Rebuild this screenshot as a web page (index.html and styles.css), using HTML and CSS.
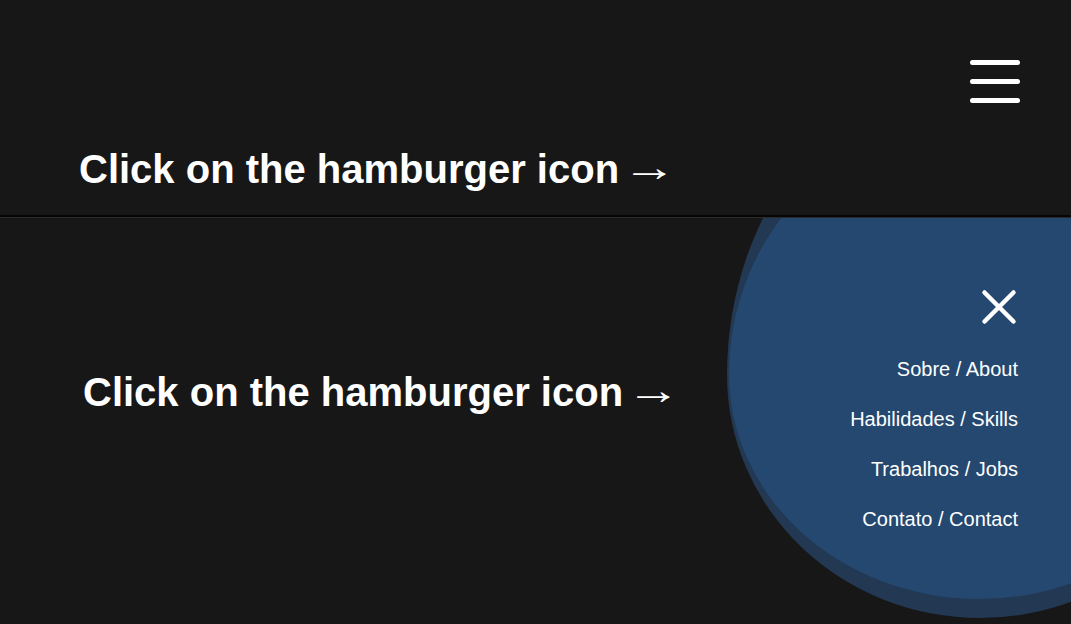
FILE: index.html
```html
<!DOCTYPE html>
<html lang="en">
<head>
<meta charset="utf-8">
<title>Circular menu</title>
<link rel="stylesheet" href="styles.css">
</head>
<body>
  <section class="panel panel-closed">
    <div class="topbar">
      <button class="hamburger" aria-label="Open menu">
        <span class="bar"></span>
        <span class="bar"></span>
        <span class="bar"></span>
      </button>
    </div>
    <h1 class="title">Click on the hamburger icon<span class="arrow">→</span></h1>
  </section>

  <section class="panel panel-open">
    <h1 class="title title-open">Click on the hamburger icon<span class="arrow">→</span></h1>
    <div class="blob-shadow"></div>
    <div class="blob"></div>
    <nav class="menu">
      <button class="close" aria-label="Close menu">
        <svg width="36" height="36" viewBox="0 0 36 36">
          <line x1="3.5" y1="3.5" x2="32.5" y2="32.5" />
          <line x1="32.5" y1="3.5" x2="3.5" y2="32.5" />
        </svg>
      </button>
      <ul class="links">
        <li><a href="#">Sobre / About</a></li>
        <li><a href="#">Habilidades / Skills</a></li>
        <li><a href="#">Trabalhos / Jobs</a></li>
        <li><a href="#">Contato / Contact</a></li>
      </ul>
    </nav>
  </section>
</body>
</html>
```

FILE: styles.css
```css
* { box-sizing: border-box; }

html, body {
  margin: 0;
  padding: 0;
  background: #171717;
  overflow: hidden;
}

body {
  font-family: "Liberation Sans", Arial, sans-serif;
  color: #ffffff;
}

.panel {
  position: relative;
  overflow: hidden;
  background: #171717;
}

.panel-closed {
  height: 217px;
  border-bottom: 2px solid #060606;
  display: flex;
  flex-direction: column;
}

.topbar {
  display: flex;
  justify-content: flex-end;
  padding: 60px 51px 0 0;
}

.hamburger {
  display: flex;
  flex-direction: column;
  gap: 14px;
  padding: 0;
  margin: 0;
  border: 0;
  background: transparent;
}

.bar {
  display: block;
  width: 50px;
  height: 5px;
  border-radius: 3px;
  background: #ffffff;
}

.title {
  margin: 43px 0 0 0;
  padding-left: 79px;
  font-size: 40px;
  line-height: 46px;
  font-weight: 700;
  color: #ffffff;
  white-space: nowrap;
}

.arrow {
  display: inline-block;
  margin-left: 2.5px;
  transform: translateY(-2px) scaleX(1.36);
  transform-origin: left center;
}

.panel-open {
  height: 407px;
  border-top: 1px solid #2a2a2a;
}

.title-open {
  margin: 151px 0 0 0;
  padding-left: 83px;
}

.blob-shadow {
  position: absolute;
  left: 727px;
  top: -148px;
  width: 506px;
  height: 548px;
  background: #233852;
  border-radius: 253px / 305px 305px 243px 243px;
}

.blob {
  position: absolute;
  left: 729px;
  top: -99px;
  width: 500px;
  height: 480px;
  background: #24486f;
  border-radius: 250px / 255px 255px 225px 225px;
}

.menu {
  position: absolute;
  top: 71px;
  right: 53px;
  display: flex;
  flex-direction: column;
  align-items: flex-end;
}

.close {
  display: block;
  width: 36px;
  height: 36px;
  margin: 0 1px 19px 0;
  padding: 0;
  border: 0;
  background: transparent;
}

.close svg {
  display: block;
}

.close line {
  stroke: #ffffff;
  stroke-width: 4.5;
  stroke-linecap: round;
}

.links {
  list-style: none;
  margin: 0;
  padding: 0;
  text-align: right;
}

.links li {
  font-size: 20px;
  line-height: 50px;
}

.links a {
  color: #ffffff;
  text-decoration: none;
}
```
